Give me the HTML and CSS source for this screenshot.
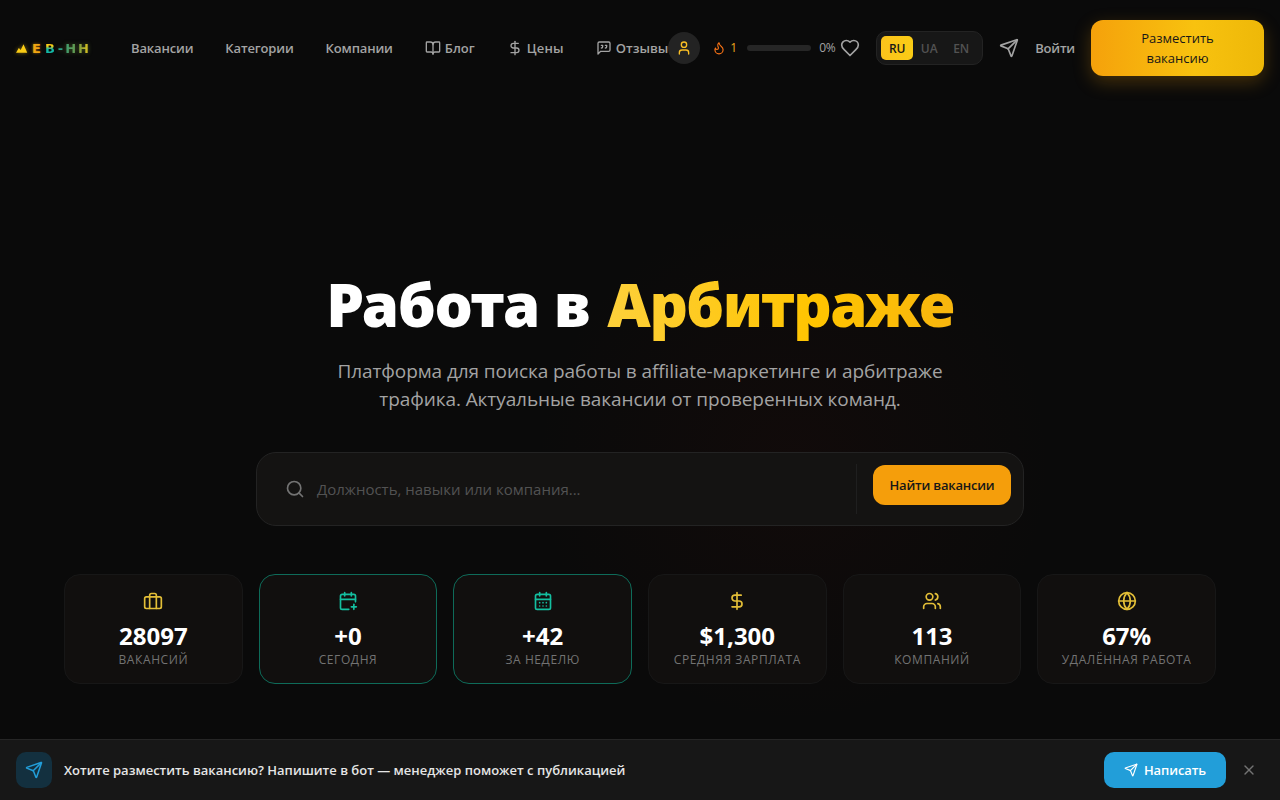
FILE: index.html
```html
<!DOCTYPE html>
<html lang="ru">
<head>
<meta charset="utf-8">
<title>WEB-HH</title>
<link rel="stylesheet" href="styles.css">
</head>
<body>
<svg class="defs" width="0" height="0" aria-hidden="true">
  <symbol id="i-send" viewBox="0 0 24 24"><path d="M14.536 21.686a.5.5 0 0 0 .937-.024l6.5-19a.496.496 0 0 0-.635-.635l-19 6.5a.5.5 0 0 0-.024.937l7.93 3.18a2 2 0 0 1 1.112 1.11z"/><path d="m21.854 2.147-10.94 10.939"/></symbol>
  <symbol id="i-dollar" viewBox="0 0 24 24"><path d="M12 2v20"/><path d="M17 5H9.5a3.5 3.5 0 0 0 0 7h5a3.5 3.5 0 0 1 0 7H6"/></symbol>
</svg>
<header class="topbar">
  <a class="logo"><svg class="logo-w" viewBox="0 0 16 9"><path d="M0 9 3 4l2 2 3-6 4 9z"/></svg><span class="l-e">E</span><span class="l-b">B</span><span class="l-hh">-HH</span></a>
  <nav class="nav">
    <a class="nav-link">Вакансии</a>
    <a class="nav-link">Категории</a>
    <a class="nav-link">Компании</a>
    <a class="nav-link nav-ic"><svg class="ic ic16" viewBox="0 0 24 24"><path d="M12 7v14"/><path d="M3 18a1 1 0 0 1-1-1V4a1 1 0 0 1 1-1h5a4 4 0 0 1 4 4 4 4 0 0 1 4-4h5a1 1 0 0 1 1 1v13a1 1 0 0 1-1 1h-6a3 3 0 0 0-3 3 3 3 0 0 0-3-3z"/></svg>Блог</a>
    <a class="nav-link nav-ic nav-wide"><svg class="ic ic16"><use href="#i-dollar"/></svg>Цены</a>
    <a class="nav-link nav-ic"><svg class="ic ic16" viewBox="0 0 24 24"><path d="M21 15a2 2 0 0 1-2 2H7l-4 4V5a2 2 0 0 1 2-2h14a2 2 0 0 1 2 2z"/><path d="M8 12a2 2 0 0 0 2-2V8H8"/><path d="M14 12a2 2 0 0 0 2-2V8h-2"/></svg>Отзывы</a>
  </nav>
  <div class="progress-group">
    <span class="avatar"><svg class="ic ic16" viewBox="0 0 24 24"><path d="M19 21v-2a4 4 0 0 0-4-4H9a4 4 0 0 0-4 4v2"/><circle cx="12" cy="7" r="4"/></svg></span>
    <span class="streak"><svg class="ic ic14" viewBox="0 0 24 24"><path d="M8.5 14.5A2.5 2.5 0 0 0 11 12c0-1.38-.5-2-1-3-1.072-2.143-.224-4.054 2-6 .5 2.5 2 4.9 4 6.5 2 1.6 3 3.5 3 5.5a7 7 0 1 1-14 0c0-1.153.433-2.294 1-3a2.5 2.5 0 0 0 2.5 2.5z"/></svg><span class="streak-n">1</span></span>
    <span class="bar"></span>
    <span class="pct">0%</span>
    <svg class="ic ic20 heart" viewBox="0 0 24 24"><path d="M19 14c1.49-1.46 3-3.21 3-5.5A5.5 5.5 0 0 0 16.5 3c-1.76 0-3 .5-4.5 2-1.5-1.5-2.74-2-4.5-2A5.5 5.5 0 0 0 2 8.5c0 2.3 1.5 4.05 3 5.5l7 7Z"/></svg>
  </div>
  <div class="lang">
    <span class="lang-item lang-on">RU</span>
    <span class="lang-item">UA</span>
    <span class="lang-item">EN</span>
  </div>
  <svg class="ic ic20 tg"><use href="#i-send"/></svg>
  <a class="login">Войти</a>
  <a class="post-btn">Разместить<br>вакансию</a>
</header>
<main class="hero">
  <h1 class="title">Работа в <span class="accent">Арбитраже</span></h1>
  <p class="sub">Платформа для поиска работы в affiliate-маркетинге и арбитраже трафика. Актуальные вакансии от проверенных команд.</p>
  <div class="search">
    <svg class="ic ic20 search-ic" viewBox="0 0 24 24"><circle cx="11" cy="11" r="8"/><path d="m21 21-4.3-4.3"/></svg>
    <span class="placeholder">Должность, навыки или компания...</span>
    <span class="divider"></span>
    <a class="find-btn">Найти вакансии</a>
  </div>
  <section class="stats">
    <div class="stat">
      <svg class="ic ic20 yellow" viewBox="0 0 24 24"><path d="M16 21V5a2 2 0 0 0-2-2h-4a2 2 0 0 0-2 2v16"/><rect x="2" y="7" width="20" height="14" rx="2"/></svg>
      <b class="val">28097</b><span class="lbl">Вакансий</span>
    </div>
    <div class="stat stat-new">
      <svg class="ic ic20 teal" viewBox="0 0 24 24"><path d="M8 2v4"/><path d="M16 2v4"/><path d="M21 13V6a2 2 0 0 0-2-2H5a2 2 0 0 0-2 2v14a2 2 0 0 0 2 2h8"/><path d="M3 10h18"/><path d="M16 19h6"/><path d="M19 16v6"/></svg>
      <b class="val">+0</b><span class="lbl">Сегодня</span>
    </div>
    <div class="stat stat-new">
      <svg class="ic ic20 teal" viewBox="0 0 24 24"><path d="M8 2v4"/><path d="M16 2v4"/><rect x="3" y="4" width="18" height="18" rx="2"/><path d="M3 10h18"/><path d="M8 14h.01"/><path d="M12 14h.01"/><path d="M16 14h.01"/><path d="M8 18h.01"/><path d="M12 18h.01"/><path d="M16 18h.01"/></svg>
      <b class="val">+42</b><span class="lbl">За неделю</span>
    </div>
    <div class="stat">
      <svg class="ic ic20 yellow"><use href="#i-dollar"/></svg>
      <b class="val">$1,300</b><span class="lbl">Средняя зарплата</span>
    </div>
    <div class="stat">
      <svg class="ic ic20 yellow" viewBox="0 0 24 24"><path d="M16 21v-2a4 4 0 0 0-4-4H6a4 4 0 0 0-4 4v2"/><circle cx="9" cy="7" r="4"/><path d="M22 21v-2a4 4 0 0 0-3-3.87"/><path d="M16 3.13a4 4 0 0 1 0 7.75"/></svg>
      <b class="val">113</b><span class="lbl">Компаний</span>
    </div>
    <div class="stat">
      <svg class="ic ic20 yellow" viewBox="0 0 24 24"><circle cx="12" cy="12" r="10"/><path d="M12 2a14.5 14.5 0 0 0 0 20 14.5 14.5 0 0 0 0-20"/><path d="M2 12h20"/></svg>
      <b class="val">67%</b><span class="lbl">Удалённая работа</span>
    </div>
  </section>
</main>
<aside class="notice">
  <span class="notice-ic"><svg class="ic ic18"><use href="#i-send"/></svg></span>
  <span class="notice-text">Хотите разместить вакансию? Напишите в бот — менеджер поможет с публикацией</span>
  <a class="write-btn"><svg class="ic ic14"><use href="#i-send"/></svg>Написать</a>
  <svg class="ic ic16 close" viewBox="0 0 24 24"><path d="M18 6 6 18"/><path d="m6 6 12 12"/></svg>
</aside>
</body>
</html>
```
FILE: styles.css
```css
* { box-sizing: border-box; }
html, body { margin: 0; height: 100%; }
body {
  font-family: "Open Sans", "Noto Sans", sans-serif;
  color: #fff;
  background:
    radial-gradient(circle at 62% 58%, rgba(90, 16, 8, .09), transparent 28%),
    #0a0a0a;
  overflow: hidden;
}
.defs { position: absolute; }
.ic { fill: none; stroke: currentColor; stroke-width: 2; stroke-linecap: round; stroke-linejoin: round; flex: none; display: block; }
.ic14 { width: 14px; height: 14px; }
.ic16 { width: 16px; height: 16px; }
.ic18 { width: 18px; height: 18px; }
.ic20 { width: 20px; height: 20px; }
.yellow { color: #fad23c; opacity: .9; }
.teal { color: #14bfa0; }

.topbar { height: 96px; padding: 0 16px; display: flex; align-items: center; }
.logo {
  width: 115px; flex: none; display: flex; align-items: center;
  font: 700 13px/1 "DejaVu Sans", sans-serif;
  height: 14px;
}
.logo-w { width: 15px; height: 9px; fill: #facc15; flex: none; filter: drop-shadow(0 0 2px rgba(250, 204, 21, .5)); }
.l-e { color: #f0a512; margin-left: 1px; text-shadow: 0 0 3px rgba(245, 158, 11, .6); }
.l-b { margin-left: 4px; background: linear-gradient(180deg, #facc15 30%, #14b8a6 55%); -webkit-background-clip: text; background-clip: text; color: transparent; }
.l-hh {
  margin-left: 3px; letter-spacing: 2px;
  background: linear-gradient(90deg, #1f9f8f, #6f9a45 60%, #facc15);
  -webkit-background-clip: text; background-clip: text; color: transparent;
  filter: drop-shadow(0 0 2px rgba(120, 160, 60, .5));
}

.nav { display: flex; gap: 32px; }
.nav-link {
  display: flex; align-items: center; gap: 4px;
  font-size: 13px; font-weight: 600; line-height: 20px; letter-spacing: -.15px;
  color: #a3a3a3;
  white-space: nowrap;
}
.nav-ic { letter-spacing: 0; }
.nav-wide { letter-spacing: .2px; }
.progress-group { display: flex; align-items: center; }
.avatar {
  width: 32px; height: 32px; border-radius: 50%;
  background: #232323; color: #fbbf24;
  display: flex; align-items: center; justify-content: center;
}
.streak { margin-left: 12px; display: flex; align-items: center; gap: 4px; color: #f97316; }
.streak-n { color: #eea51c; font-size: 12px; font-weight: 500; line-height: 16px; }
.bar { margin-left: 10px; width: 64px; height: 6px; border-radius: 3px; background: #262626; }
.pct { margin-left: 8px; width: 16px; font-size: 12px; line-height: 16px; letter-spacing: -.2px; color: #a3a3a3; white-space: nowrap; }
.heart { margin-left: 5px; color: #a3a3a3; }

.lang {
  margin-left: 16px; padding: 4px; height: 34px; width: 107px;
  display: flex; gap: 0;
  background: #171717; border: 1px solid #232323; border-radius: 10px;
}
.lang-item {
  width: 32px; height: 24px; border-radius: 5px;
  display: flex; align-items: center; justify-content: center;
  font-size: 12px; font-weight: 600; color: #525252;
}
.lang-on { background: linear-gradient(90deg, #fbc31c, #facc15); color: #171717; }
.tg { margin-left: 16px; color: #a3a3a3; }
.login { margin-left: 16px; font-size: 13px; font-weight: 600; line-height: 20px; letter-spacing: -.2px; color: #a3a3a3; }
.post-btn {
  margin-left: 16px; width: 173px; height: 56px; border-radius: 12px;
  display: flex; align-items: center; justify-content: center; text-align: center;
  font-size: 13px; font-weight: 500; line-height: 20px; color: #171717;
  background: linear-gradient(90deg, #f5a10b, #f8c20f 60%, #eeb808);
  box-shadow: 0 6px 18px rgba(245, 158, 11, .25);
}

.hero { padding: 172px 64px 0; display: flex; flex-direction: column; align-items: center; }
.title { margin: 0; font-family: "Noto Sans", sans-serif; font-size: 60px; font-weight: 900; line-height: 72px; letter-spacing: -1.07px; text-align: center; }
.accent {
  margin-left: 3px; letter-spacing: -1.4px;
  background: linear-gradient(90deg, #fdd03b, #ffc400 60%, #f8b60e);
  -webkit-background-clip: text; background-clip: text; color: transparent;
}
.sub { margin: 17px 0 0; width: 672px; font-size: 19px; line-height: 28px; letter-spacing: -.08px; color: #a3a3a3; text-align: center; }
.search {
  margin-top: 39px; width: 768px; height: 74px; padding: 0 12px 0 28px;
  display: flex; align-items: center;
  background: #141312; border: 1px solid #232323; border-radius: 20px;
}
.search-ic { color: #737373; }
.placeholder { margin-left: 12px; flex: 1; font-size: 15px; color: #525252; }
.divider { width: 1px; height: 50px; background: #1f1f1f; margin-right: 16px; }
.find-btn {
  width: 138px; height: 40px; margin-bottom: 8px; border-radius: 12px; background: #f59e0b; color: #171717;
  display: flex; align-items: center; justify-content: center;
  font-size: 13px; font-weight: 600; letter-spacing: -.2px;
}
.stats { margin-top: 48px; width: 1152px; display: grid; grid-template-columns: repeat(6, 1fr); gap: 16px; }
.stat {
  height: 110px; padding-top: 16px; border-radius: 16px;
  display: flex; flex-direction: column; align-items: center;
  background: #110f0e; border: 1px solid #171717;
}
.stat-new { border-color: #0e6b59; }
.val { margin-top: 9px; font-size: 24px; font-weight: 700; line-height: 32px; }
.lbl { font-size: 12px; line-height: 16px; letter-spacing: .6px; text-transform: uppercase; color: #737373; }

.notice {
  position: fixed; left: 0; right: 0; bottom: 0; height: 61px; padding: 0 23px 0 16px;
  display: flex; align-items: center;
  background: #171717; border-top: 1px solid #262626;
}
.notice-ic {
  width: 36px; height: 36px; border-radius: 10px; background: #13303f; color: #229ed9;
  display: flex; align-items: center; justify-content: center;
}
.notice-text { margin-left: 12px; flex: 1; font-size: 13px; font-weight: 600; color: #e5e5e5; }
.write-btn {
  width: 122px; height: 36px; border-radius: 10px; background: #229ed9; color: #fff;
  display: flex; align-items: center; justify-content: center; gap: 6px;
  font-size: 13px; font-weight: 600; letter-spacing: -.1px;
}
.close { margin-left: 15px; color: #737373; }
```
